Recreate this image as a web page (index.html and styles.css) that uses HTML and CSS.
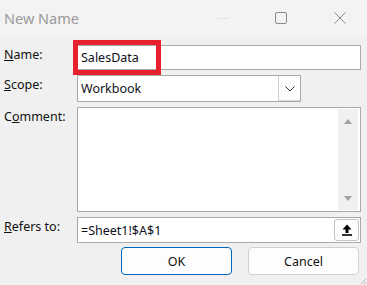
FILE: index.html
```html
<!DOCTYPE html>
<html>
<head>
<meta charset="utf-8">
<link rel="stylesheet" href="styles.css">
</head>
<body>
<div class="dialog">
  <div class="titlebar">
    <span class="title">New Name</span>
    <div class="controls">
      <span class="ctl min"><svg width="12" height="12" viewBox="0 0 12 12"><path d="M0 6.5H12" stroke="#e2e2e2" stroke-width="1"/></svg></span>
      <span class="ctl max"><svg width="12" height="12" viewBox="0 0 12 12"><rect x="0.5" y="0.5" width="11" height="11" rx="1.5" fill="none" stroke="#8a8a8a" stroke-width="1"/></svg></span>
      <span class="ctl close"><svg width="12" height="12" viewBox="0 0 12 12"><path d="M0.5 0.5L11.5 11.5M11.5 0.5L0.5 11.5" stroke="#8a8a8a" stroke-width="1"/></svg></span>
    </div>
  </div>
  <div class="body">
    <div class="form">
      <div class="label"><u>N</u>ame:</div>
      <div class="field name-field">
        <div class="input">SalesData</div>
        <div class="highlight"></div>
      </div>

      <div class="label"><u>S</u>cope:</div>
      <div class="field">
        <div class="combo">
          <span class="combo-text">Workbook</span>
          <span class="combo-btn"><svg width="10" height="6" viewBox="0 0 10 6"><path d="M0.5 0.5L5 5L9.5 0.5" fill="none" stroke="#333" stroke-width="1"/></svg></span>
        </div>
      </div>

      <div class="label">C<u>o</u>mment:</div>
      <div class="field">
        <div class="textarea">
          <div class="scrollbar">
            <svg class="arrow" width="8" height="5" viewBox="0 0 8 5"><path d="M0 5L4 0L8 5Z" fill="#a3a3a3"/></svg>
            <svg class="arrow" width="8" height="5" viewBox="0 0 8 5"><path d="M0 0L4 5L8 0Z" fill="#a3a3a3"/></svg>
          </div>
        </div>
      </div>

      <div class="label"><u>R</u>efers to:</div>
      <div class="field">
        <div class="refinput">
          <span class="ref-text">=Sheet1!$A$1</span>
          <span class="ref-btn"><svg width="10" height="12" viewBox="0 0 10 12"><path d="M5 0.5L9.5 5.5H6.5V9H3.5V5.5H0.5Z" fill="#000"/><rect x="0" y="10.2" width="10" height="1.6" fill="#000"/></svg></span>
        </div>
      </div>
    </div>
    <div class="buttons">
      <button class="btn ok">OK</button>
      <button class="btn">Cancel</button>
    </div>
  </div>
  <svg class="grip" width="7" height="7" viewBox="0 0 7 7"><path d="M6 1L1 6M6 4L4 6" stroke="#b5b5b5" stroke-width="1"/></svg>
</div>
</body>
</html>
```

FILE: styles.css
```css
html, body {
  margin: 0;
  padding: 0;
}
body {
  width: 367px;
  height: 285px;
  overflow: hidden;
  background: #f0f0f0;
  font-family: "Noto Sans", "Open Sans", sans-serif;
  color: #111;
}
.dialog {
  position: relative;
  width: 367px;
  height: 285px;
  background: #f0f0f0;
}
.titlebar {
  height: 35px;
  background: #f3f3f3;
  display: flex;
  align-items: center;
  justify-content: space-between;
}
.title {
  font-size: 14.5px;
  color: #9a9a9a;
  padding-left: 4px;
  margin-top: 0px;
}
.controls {
  display: flex;
  align-items: center;
  height: 35px;
}
.ctl {
  display: flex;
  align-items: center;
  justify-content: center;
  height: 35px;
}
.ctl svg { display: block; }
.min { width: 12px; margin-right: 46px; }
.max { width: 12px; margin-right: 47px; }
.close { width: 12px; margin-right: 21px; }
.body {
  padding: 10px 6px 0 4px;
}
.form {
  display: grid;
  grid-template-columns: 73px 284px;
  grid-template-rows: 25px 27px 105px 26px;
  row-gap: 5px;
}
.label {
  font-size: 12.5px;
  line-height: 16px;
  padding-top: 2px;
  color: #111;
}
.label u {
  text-underline-offset: 1px;
}
.field {
  position: relative;
}
.input, .combo, .textarea, .refinput {
  box-sizing: border-box;
  background: #fff;
  border: 1px solid #a9a9a9;
  height: 100%;
  font-size: 12.5px;
  color: #10101a;
}
.input {
  padding-left: 3px;
  line-height: 23px;
  width: 284px;
}
.highlight {
  position: absolute;
  left: -4px;
  top: -5px;
  width: 88px;
  height: 35px;
  box-sizing: border-box;
  border: 5px solid #e8202d;
}
.combo {
  width: 224px;
  display: flex;
  align-items: stretch;
}
.combo-text {
  flex: 1;
  padding-left: 3px;
  line-height: 25px;
}
.combo-btn {
  width: 21px;
  border-left: 1px solid #d0d0d0;
  background: #fdfdfd;
  display: flex;
  align-items: center;
  justify-content: center;
  box-shadow: inset 0 -1px 0 #d8d8d8;
}
.combo-btn svg { display: block; }
.textarea {
  width: 284px;
  display: flex;
  justify-content: flex-end;
  padding: 1px 2px 1px 0;
}
.scrollbar {
  width: 20px;
  background: #f0f0f0;
  display: flex;
  flex-direction: column;
  align-items: center;
  justify-content: space-between;
  padding: 10px 0 9px;
  box-sizing: border-box;
}
.arrow { display: block; }
.refinput {
  width: 284px;
  display: flex;
  align-items: stretch;
  padding: 1px 1px 1px 0;
}
.ref-text {
  flex: 1;
  padding-left: 3px;
  line-height: 23px;
}
.ref-btn {
  width: 25px;
  box-sizing: border-box;
  border: 1px solid #c4c4c4;
  border-radius: 3px;
  background: #fdfdfd;
  display: flex;
  align-items: center;
  justify-content: center;
}
.ref-btn svg { display: block; }
.buttons {
  display: flex;
  gap: 16px;
  padding-left: 117px;
  margin-top: 4px;
}
.btn {
  box-sizing: border-box;
  width: 111px;
  height: 28px;
  border: 1px solid #d0d0d0;
  border-radius: 4px;
  background: #fdfdfd;
  font-family: "Noto Sans", "Open Sans", sans-serif;
  font-size: 12.5px;
  color: #111;
  padding: 0;
}
.btn.ok {
  border: 1px solid #0067c0;
}
.grip {
  position: absolute;
  right: 0;
  bottom: 0;
  display: block;
}
```
